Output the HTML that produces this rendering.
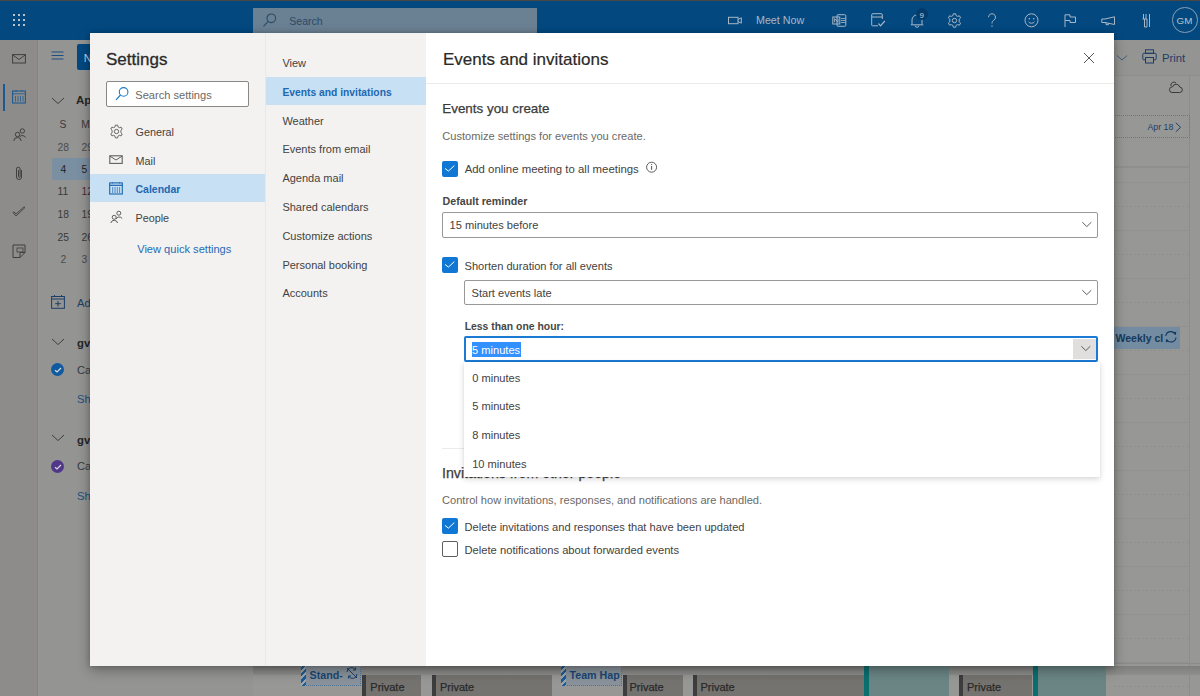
<!DOCTYPE html>
<html><head><meta charset="utf-8"><style>
html,body{margin:0;padding:0;width:1200px;height:696px;overflow:hidden;background:#959595}
body{position:relative;font-family:"Liberation Sans",sans-serif}
.t{position:absolute;white-space:nowrap}
.r{position:absolute}
</style></head><body>
<div class="r" style="left:0px;top:0px;width:1200px;height:696px;background:#979796"></div>
<div class="r" style="left:0px;top:0px;width:1200px;height:40px;background:#034980"></div>
<div class="r" style="left:0px;top:0px;width:1200px;height:1px;background:#4a4644"></div>
<div class="r" style="left:12.85px;top:13.85px;width:2.3px;height:2.3px;background:#b9c3cc"></div>
<div class="r" style="left:17.85px;top:13.85px;width:2.3px;height:2.3px;background:#b9c3cc"></div>
<div class="r" style="left:22.75px;top:13.85px;width:2.3px;height:2.3px;background:#b9c3cc"></div>
<div class="r" style="left:12.85px;top:18.650000000000002px;width:2.3px;height:2.3px;background:#b9c3cc"></div>
<div class="r" style="left:17.85px;top:18.650000000000002px;width:2.3px;height:2.3px;background:#b9c3cc"></div>
<div class="r" style="left:22.75px;top:18.650000000000002px;width:2.3px;height:2.3px;background:#b9c3cc"></div>
<div class="r" style="left:12.85px;top:23.55px;width:2.3px;height:2.3px;background:#b9c3cc"></div>
<div class="r" style="left:17.85px;top:23.55px;width:2.3px;height:2.3px;background:#b9c3cc"></div>
<div class="r" style="left:22.75px;top:23.55px;width:2.3px;height:2.3px;background:#b9c3cc"></div>
<div class="r" style="left:253px;top:7.5px;width:284px;height:26px;background:#6a8093"></div>
<svg class="r" style="left:262px;top:12px" width="16" height="16" viewBox="0 0 16 16"><circle cx="9.3" cy="6.3" r="4.3" fill="none" stroke="#2a4a66" stroke-width="1.1"/><path d="M6.2 9.4 L1.5 14.3" stroke="#2a4a66" stroke-width="1.1"/></svg>
<div class="t" style="left:289.2px;top:11px;font-size:10.6px;line-height:20px;color:#2a4a66;">Search</div>
<svg class="r" style="left:727px;top:16px" width="16" height="9" viewBox="0 0 16 9"><rect x="1.5" y="1.3" width="9.5" height="6.4" fill="none" stroke="#a9b7c5" stroke-width="1"/><path d="M11 3.5 L14.3 1.8 V7.2 L11 5.5" fill="none" stroke="#a9b7c5" stroke-width="1"/></svg>
<div class="t" style="left:756px;top:10px;font-size:10.7px;line-height:20px;color:#a9b7c5;">Meet Now</div>
<svg class="r" style="left:832px;top:14px" width="15" height="13" viewBox="0 0 15 13"><rect x="5" y="0.7" width="8.8" height="11.6" rx="1" fill="none" stroke="#a9b7c5" stroke-width="1"/><rect x="0.8" y="3" width="7" height="7" fill="none" stroke="#a9b7c5" stroke-width="1"/><path d="M2.6 8.3 V4.6 L6 8.3 V4.6" fill="none" stroke="#a9b7c5" stroke-width="0.9"/><path d="M9 4.5 H13.5 M9 6.5 H13.5 M9 8.5 H13.5" stroke="#a9b7c5" stroke-width="0.8"/></svg>
<svg class="r" style="left:871px;top:13px" width="15" height="15" viewBox="0 0 15 15"><path d="M7 12.8 H1.5 a0.8 0.8 0 0 1 -0.8 -0.8 V2 a1.3 1.3 0 0 1 1.3 -1.3 H10 a1.3 1.3 0 0 1 1.3 1.3 V6" fill="none" stroke="#a9b7c5" stroke-width="1"/><path d="M0.7 4 H11.3" stroke="#a9b7c5" stroke-width="1"/><path d="M7.5 10.5 L9.5 12.8 L13.8 8" fill="none" stroke="#a9b7c5" stroke-width="1.2"/></svg>
<svg class="r" style="left:910px;top:13px" width="14" height="15" viewBox="0 0 14 15"><path d="M2 11.5 V7 a5 5 0 0 1 10 0 V11.5 M0.8 11.8 H13.2 M5.2 12.5 a1.8 1.8 0 0 0 3.6 0" fill="none" stroke="#a9b7c5" stroke-width="1"/></svg>
<div class="r" style="left:916.4px;top:7.7px;width:12px;height:12px;background:#033b6b;border-radius:50%"></div>
<div class="t" style="left:919.6px;top:6px;font-size:8.0px;line-height:20px;color:#c9d3dd;">9</div>
<svg class="r" style="left:947px;top:13px" width="15" height="15" viewBox="0 0 15 15"><circle cx="7.5" cy="7.5" r="2.2" fill="none" stroke="#a9b7c5" stroke-width="1"/><path d="M6.3 0.8 H8.7 L9.1 2.6 L10.6 3.4 L12.4 2.8 L13.6 4.9 L12.2 6.2 V8.8 L13.6 10.1 L12.4 12.2 L10.6 11.6 L9.1 12.4 L8.7 14.2 H6.3 L5.9 12.4 L4.4 11.6 L2.6 12.2 L1.4 10.1 L2.8 8.8 V6.2 L1.4 4.9 L2.6 2.8 L4.4 3.4 L5.9 2.6 Z" fill="none" stroke="#a9b7c5" stroke-width="1"/></svg>
<svg class="r" style="left:986px;top:13px" width="12" height="15" viewBox="0 0 12 15"><path d="M2.5 4.2 a3.5 3.5 0 1 1 5.5 2.9 C6.6 8 6 8.8 6 10.5" fill="none" stroke="#a9b7c5" stroke-width="1"/><circle cx="6" cy="13" r="0.7" fill="#a9b7c5"/></svg>
<svg class="r" style="left:1024px;top:13px" width="15" height="15" viewBox="0 0 15 15"><circle cx="7.5" cy="7.3" r="6.5" fill="none" stroke="#a9b7c5" stroke-width="1"/><circle cx="5.3" cy="5.8" r="0.8" fill="#a9b7c5"/><circle cx="9.7" cy="5.8" r="0.8" fill="#a9b7c5"/><path d="M4.5 8.8 a3.5 3 0 0 0 6 0" fill="none" stroke="#a9b7c5" stroke-width="1"/></svg>
<svg class="r" style="left:1064px;top:14px" width="13" height="14" viewBox="0 0 13 14"><path d="M1 13 V0.8 H6 V3 H11.5 V8.5 H6 V6.5 H1" fill="none" stroke="#a9b7c5" stroke-width="1"/></svg>
<svg class="r" style="left:1101px;top:16px" width="15" height="10" viewBox="0 0 15 10"><path d="M0.8 3 H4 L13.5 0.8 V8.5 L4 6.5 H0.8 Z M5 6.7 V8.7 H7.5 V7.3" fill="none" stroke="#a9b7c5" stroke-width="1"/></svg>
<svg class="r" style="left:1141px;top:13px" width="11" height="15" viewBox="0 0 11 15"><path d="M2.5 1 V6 M5 1 V6 M1.5 6 H6 V14 H3.5 V6 M8.5 1 V14" fill="none" stroke="#a9b7c5" stroke-width="1"/></svg>
<div class="r" style="left:1172.3px;top:7.4px;width:25.4px;height:25.4px;border:1px solid #8b9fb3;border-radius:50%;box-sizing:border-box"></div>
<div class="t" style="left:1176.6px;top:11px;font-size:9.8px;line-height:20px;color:#b8c4cf;">GM</div>
<div class="r" style="left:0px;top:40px;width:37px;height:656px;background:#8e8c8a"></div>
<div class="r" style="left:37px;top:40px;width:1px;height:656px;background:#858483"></div>
<svg class="r" style="left:12px;top:54px" width="14" height="10" viewBox="0 0 14 10"><rect x="0.6" y="0.6" width="12.8" height="8.4" fill="none" stroke="#3f3f3f" stroke-width="1"/><path d="M0.8 1 L7 5.5 L13.2 1" fill="none" stroke="#3f3f3f" stroke-width="1"/></svg>
<div class="r" style="left:3.2px;top:84.3px;width:2px;height:26.4px;background:#1c5a94"></div>
<svg class="r" style="left:12px;top:90px" width="14" height="14" viewBox="0 0 14 14"><rect x="0.6" y="1" width="12.8" height="12" fill="none" stroke="#1c5a94" stroke-width="1.1"/><path d="M0.6 3.8 H13.4 M4 0 V2 M10 0 V2 M3.5 6 V11.5 M6 6 V11.5 M8.5 6 V11.5 M11 6 V11.5" stroke="#1c5a94" stroke-width="0.8"/></svg>
<svg class="r" style="left:13px;top:128px" width="13" height="14" viewBox="0 0 13 14"><circle cx="4.5" cy="6.5" r="2.2" fill="none" stroke="#3f3f3f" stroke-width="1"/><circle cx="9.3" cy="3" r="2.2" fill="none" stroke="#3f3f3f" stroke-width="1"/><path d="M0.8 13 a3.7 3.5 0 0 1 7.4 0 M6.5 9 a3.5 3.5 0 0 1 6 0.5" fill="none" stroke="#3f3f3f" stroke-width="1"/></svg>
<svg class="r" style="left:15px;top:166px" width="9" height="15" viewBox="0 0 9 15"><path d="M6.5 4 V11 a2.5 2.5 0 0 1 -5 0 V3 a1.8 1.8 0 0 1 3.6 0 V10.5 a0.8 0.8 0 0 1 -1.6 0 V4" fill="none" stroke="#3f3f3f" stroke-width="1"/></svg>
<svg class="r" style="left:12px;top:206px" width="14" height="12" viewBox="0 0 14 12"><path d="M1 6.5 L4 10 L13 1.5 L12 0.8 L4 8 L2 5.8 Z" fill="none" stroke="#3f3f3f" stroke-width="0.9"/></svg>
<svg class="r" style="left:12px;top:244px" width="14" height="15" viewBox="0 0 14 15"><path d="M8 13.5 H1 V1 H13 V8.5 L8 13.5 V8.5 H13" fill="none" stroke="#3f3f3f" stroke-width="1"/><rect x="5" y="4" width="6" height="4" fill="none" stroke="#3f3f3f" stroke-width="0.8"/></svg>
<div class="r" style="left:38px;top:40px;width:215px;height:656px;background:#949493"></div>
<svg class="r" style="left:51px;top:51px" width="13" height="9" viewBox="0 0 13 9"><path d="M0.5 1 H12.5 M0.5 4.5 H12.5 M0.5 8 H12.5" stroke="#1c4f80" stroke-width="1"/></svg>
<div class="r" style="left:76.5px;top:44.4px;width:60px;height:25.3px;background:#034980;border-radius:2px"></div>
<div class="t" style="left:83.8px;top:48px;font-size:11.0px;line-height:20px;color:#c9d5e0;">New event</div>
<svg class="r" style="left:51px;top:97px" width="14" height="8" viewBox="0 0 14 8"><path d="M1 1 L7 6.5 L13 1" fill="none" stroke="#3f3f3f" stroke-width="1"/></svg>
<div class="t" style="left:76px;top:90px;font-size:11.5px;line-height:20px;color:#262626;font-weight:bold;">April 2023</div>
<div class="r" style="left:52.3px;top:158px;width:60px;height:22.4px;background:#7a8fa2;border-radius:2px"></div>
<div class="t" style="left:59.5px;top:115px;font-size:10.3px;line-height:20px;color:#3a3a3a;">S</div>
<div class="t" style="left:81.3px;top:115px;font-size:10.3px;line-height:20px;color:#3a3a3a;">M</div>
<div class="t" style="left:57.599999999999994px;top:138px;font-size:10.3px;line-height:20px;color:#4c4c4c;">28</div>
<div class="t" style="left:81.5px;top:138px;font-size:10.3px;line-height:20px;color:#4c4c4c;">29</div>
<div class="t" style="left:60.449999999999996px;top:160px;font-size:10.3px;line-height:20px;color:#1e1e1e;">4</div>
<div class="t" style="left:81.5px;top:160px;font-size:10.3px;line-height:20px;color:#1e1e1e;">5</div>
<div class="t" style="left:57.599999999999994px;top:182px;font-size:10.3px;line-height:20px;color:#3a3a3a;">11</div>
<div class="t" style="left:81.5px;top:182px;font-size:10.3px;line-height:20px;color:#4a2a33;">12</div>
<div class="t" style="left:57.599999999999994px;top:205px;font-size:10.3px;line-height:20px;color:#3a3a3a;">18</div>
<div class="t" style="left:81.5px;top:205px;font-size:10.3px;line-height:20px;color:#3a3a3a;">19</div>
<div class="t" style="left:57.599999999999994px;top:228px;font-size:10.3px;line-height:20px;color:#3a3a3a;">25</div>
<div class="t" style="left:81.5px;top:228px;font-size:10.3px;line-height:20px;color:#3a3a3a;">26</div>
<div class="t" style="left:60.449999999999996px;top:250px;font-size:10.3px;line-height:20px;color:#4c4c4c;">2</div>
<div class="t" style="left:81.5px;top:250px;font-size:10.3px;line-height:20px;color:#4c4c4c;">3</div>
<svg class="r" style="left:51px;top:295px" width="14" height="14" viewBox="0 0 14 14"><rect x="0.6" y="1.5" width="12.8" height="11.8" fill="none" stroke="#1c3f66" stroke-width="1"/><path d="M0.6 4 H13.4 M3.5 0 V2 M10.5 0 V2 M7 6 V11.5 M4.2 8.7 H9.8" stroke="#1c3f66" stroke-width="1"/></svg>
<div class="t" style="left:77px;top:293px;font-size:11.2px;line-height:20px;color:#1c3f66;">Add calendar</div>
<svg class="r" style="left:51px;top:337.5px" width="14" height="8" viewBox="0 0 14 8"><path d="M1 1 L7 6.5 L13 1" fill="none" stroke="#3f3f3f" stroke-width="1"/></svg>
<div class="t" style="left:77px;top:333px;font-size:11.3px;line-height:20px;color:#262626;font-weight:bold;">gvaz</div>
<div class="r" style="left:50.7px;top:363.1px;width:13.4px;height:13.4px;background:#0f5aa0;border-radius:50%"></div>
<svg class="r" style="left:50.7px;top:363.1px" width="14" height="14" viewBox="0 0 14 14"><path d="M4 7.2 L6 9 L10 5" fill="none" stroke="#d8d8d8" stroke-width="1.2"/></svg>
<div class="t" style="left:77px;top:360px;font-size:11.2px;line-height:20px;color:#3a3a3a;">Calendar</div>
<div class="t" style="left:77px;top:389px;font-size:11.2px;line-height:20px;color:#1c4f80;">Show all</div>
<svg class="r" style="left:51px;top:434.1px" width="14" height="8" viewBox="0 0 14 8"><path d="M1 1 L7 6.5 L13 1" fill="none" stroke="#3f3f3f" stroke-width="1"/></svg>
<div class="t" style="left:77px;top:430px;font-size:11.3px;line-height:20px;color:#262626;font-weight:bold;">gvaz</div>
<div class="r" style="left:50.7px;top:459.70000000000005px;width:13.4px;height:13.4px;background:#51378a;border-radius:50%"></div>
<svg class="r" style="left:50.7px;top:459.70000000000005px" width="14" height="14" viewBox="0 0 14 14"><path d="M4 7.2 L6 9 L10 5" fill="none" stroke="#d8d8d8" stroke-width="1.2"/></svg>
<div class="t" style="left:77px;top:456px;font-size:11.2px;line-height:20px;color:#3a3a3a;">Calendar</div>
<div class="t" style="left:77px;top:486px;font-size:11.2px;line-height:20px;color:#1c4f80;">Show all</div>
<div class="r" style="left:253px;top:40px;width:947px;height:656px;background:#979796"></div>
<div class="r" style="left:253px;top:40px;width:947px;height:35px;background:#949493"></div>
<div class="r" style="left:253px;top:75px;width:947px;height:1px;background:#8f8f8e"></div>
<svg class="r" style="left:1116px;top:54px" width="12" height="8" viewBox="0 0 12 8"><path d="M1 1.5 L6 6 L11 1.5" fill="none" stroke="#3f5f80" stroke-width="1"/></svg>
<svg class="r" style="left:1142px;top:49px" width="15" height="15" viewBox="0 0 15 15"><rect x="3.5" y="0.8" width="8" height="3.5" fill="none" stroke="#1c3f66" stroke-width="1"/><rect x="0.8" y="4.3" width="13.4" height="6.5" rx="1" fill="none" stroke="#1c3f66" stroke-width="1"/><rect x="3.5" y="8.5" width="8" height="5.5" fill="#949493" stroke="#1c3f66" stroke-width="1"/></svg>
<div class="t" style="left:1162px;top:48px;font-size:11.3px;line-height:20px;color:#1c3f66;">Print</div>
<div class="r" style="left:1189px;top:75px;width:1px;height:621px;background:#8c8c8b"></div>
<div class="r" style="left:1114px;top:166px;width:76px;height:2px;background:#8f8f8e"></div>
<div class="r" style="left:1114px;top:181.8px;width:76px;height:1px;background:#92918f"></div>
<div class="r" style="left:1114px;top:205.83px;width:76px;height:1px;background:repeating-linear-gradient(90deg,#908f8d 0 2px,transparent 2px 4px)"></div>
<div class="r" style="left:1114px;top:229.86px;width:76px;height:1px;background:#92918f"></div>
<div class="r" style="left:1114px;top:253.89000000000001px;width:76px;height:1px;background:repeating-linear-gradient(90deg,#908f8d 0 2px,transparent 2px 4px)"></div>
<div class="r" style="left:1114px;top:277.92px;width:76px;height:1px;background:#92918f"></div>
<div class="r" style="left:1114px;top:301.95000000000005px;width:76px;height:1px;background:repeating-linear-gradient(90deg,#908f8d 0 2px,transparent 2px 4px)"></div>
<div class="r" style="left:1114px;top:325.98px;width:76px;height:1px;background:#92918f"></div>
<div class="r" style="left:1114px;top:350.01px;width:76px;height:1px;background:repeating-linear-gradient(90deg,#908f8d 0 2px,transparent 2px 4px)"></div>
<div class="r" style="left:1114px;top:374.04px;width:76px;height:1px;background:#92918f"></div>
<div class="r" style="left:1114px;top:398.07000000000005px;width:76px;height:1px;background:repeating-linear-gradient(90deg,#908f8d 0 2px,transparent 2px 4px)"></div>
<div class="r" style="left:1114px;top:422.1px;width:76px;height:1px;background:#92918f"></div>
<div class="r" style="left:1114px;top:446.13000000000005px;width:76px;height:1px;background:repeating-linear-gradient(90deg,#908f8d 0 2px,transparent 2px 4px)"></div>
<div class="r" style="left:1114px;top:470.16px;width:76px;height:1px;background:#92918f"></div>
<div class="r" style="left:1114px;top:494.19px;width:76px;height:1px;background:repeating-linear-gradient(90deg,#908f8d 0 2px,transparent 2px 4px)"></div>
<div class="r" style="left:1114px;top:518.22px;width:76px;height:1px;background:#92918f"></div>
<div class="r" style="left:1114px;top:542.25px;width:76px;height:1px;background:repeating-linear-gradient(90deg,#908f8d 0 2px,transparent 2px 4px)"></div>
<div class="r" style="left:1114px;top:566.28px;width:76px;height:1px;background:#92918f"></div>
<div class="r" style="left:1114px;top:590.31px;width:76px;height:1px;background:repeating-linear-gradient(90deg,#908f8d 0 2px,transparent 2px 4px)"></div>
<div class="r" style="left:1114px;top:614.34px;width:76px;height:1px;background:#92918f"></div>
<div class="r" style="left:1114px;top:638.3700000000001px;width:76px;height:1px;background:repeating-linear-gradient(90deg,#908f8d 0 2px,transparent 2px 4px)"></div>
<div class="r" style="left:1114px;top:662.4000000000001px;width:76px;height:1px;background:#92918f"></div>
<div class="r" style="left:1114px;top:686.4300000000001px;width:76px;height:1px;background:repeating-linear-gradient(90deg,#908f8d 0 2px,transparent 2px 4px)"></div>
<svg class="r" style="left:1168px;top:81px" width="15" height="13" viewBox="0 0 15 13"><path d="M4 11.5 H11.5 a2.7 2.7 0 0 0 0.3 -5.4 a3.8 3.8 0 0 0 -7.3 -0.2 a2.8 2.8 0 0 0 -0.5 5.6 Z M3 5 a3 3 0 0 1 5 -3" fill="none" stroke="#3a3a3a" stroke-width="1"/></svg>
<div class="r" style="left:1100px;top:114.9px;width:89.5px;height:23.5px;border:1px dotted #5f7a94;box-sizing:border-box"></div>
<div class="t" style="left:1147.4px;top:117px;font-size:8.8px;line-height:20px;color:#1c3f66;">Apr 18</div>
<svg class="r" style="left:1175px;top:121.5px" width="7" height="11" viewBox="0 0 7 11"><path d="M0.8 0.8 L5.6 5.3 L0.8 9.8" fill="none" stroke="#1c3f66" stroke-width="1"/></svg>
<div class="r" style="left:1110px;top:327.1px;width:70px;height:21.8px;background:#738ca2"></div>
<div class="t" style="left:1115.5px;top:328px;font-size:10.5px;line-height:20px;color:#15385c;font-weight:bold;">Weekly cl</div>
<svg class="r" style="left:1164px;top:330px" width="14" height="14" viewBox="0 0 14 14"><path d="M1.8 6 a5 5 0 0 1 9.5 -1.5 M12 7.5 a5 5 0 0 1 -9.3 2" fill="none" stroke="#15385c" stroke-width="1.1"/><path d="M9.5 2.5 L12.3 1.8 L11.8 5 Z M4.5 11.5 L1.7 12.2 L2.2 9 Z" fill="#15385c"/></svg>
<div class="r" style="left:253px;top:662.6px;width:947px;height:1px;background:#8a8a8a"></div>
<div class="r" style="left:253px;top:666px;width:947px;height:9px;background:linear-gradient(#7e7e7d,#8e8e8d)"></div>
<div class="r" style="left:362px;top:675px;width:59px;height:30px;background:#75736f"></div>
<div class="r" style="left:362px;top:675px;width:4.3px;height:30px;background:#3d3d3d"></div>
<div class="t" style="left:370.3px;top:677px;font-size:11.0px;line-height:20px;color:#2a2a2a;-webkit-text-stroke:0.25px #2a2a2a;">Private</div>
<div class="r" style="left:432px;top:675px;width:120px;height:30px;background:#75736f"></div>
<div class="r" style="left:432px;top:675px;width:4.3px;height:30px;background:#3d3d3d"></div>
<div class="t" style="left:440px;top:677px;font-size:11.0px;line-height:20px;color:#2a2a2a;-webkit-text-stroke:0.25px #2a2a2a;">Private</div>
<div class="r" style="left:623px;top:675px;width:60px;height:30px;background:#75736f"></div>
<div class="r" style="left:623px;top:675px;width:4.3px;height:30px;background:#3d3d3d"></div>
<div class="t" style="left:629.5px;top:677px;font-size:11.0px;line-height:20px;color:#2a2a2a;-webkit-text-stroke:0.25px #2a2a2a;">Private</div>
<div class="r" style="left:692.5px;top:675px;width:171px;height:30px;background:#75736f"></div>
<div class="r" style="left:692.5px;top:675px;width:4.3px;height:30px;background:#3d3d3d"></div>
<div class="t" style="left:700.5px;top:677px;font-size:11.0px;line-height:20px;color:#2a2a2a;-webkit-text-stroke:0.25px #2a2a2a;">Private</div>
<div class="r" style="left:959px;top:675px;width:73px;height:30px;background:#75736f"></div>
<div class="r" style="left:959px;top:675px;width:4.3px;height:30px;background:#3d3d3d"></div>
<div class="t" style="left:967px;top:677px;font-size:11.0px;line-height:20px;color:#2a2a2a;-webkit-text-stroke:0.25px #2a2a2a;">Private</div>
<div class="r" style="left:864px;top:655px;width:85px;height:41px;background:#6b8585"></div>
<div class="r" style="left:864px;top:655px;width:5px;height:41px;background:#0b6f6f"></div>
<div class="r" style="left:1033px;top:655px;width:73px;height:41px;background:#6b8585"></div>
<div class="r" style="left:1033px;top:655px;width:5px;height:41px;background:#0b6f6f"></div>
<div class="r" style="left:301px;top:655px;width:60px;height:31px;background:#89929a;border:1px dotted #4f7396;box-sizing:border-box"></div>
<div class="r" style="left:301px;top:655px;width:5px;height:31px;background:repeating-linear-gradient(135deg,#1d5a96 0 2.2px,#9aa5ae 2.2px 4.4px)"></div>
<div class="t" style="left:309.5px;top:665px;font-size:10.7px;line-height:20px;color:#1a4674;font-weight:bold;">Stand-</div>
<div class="r" style="left:561px;top:655px;width:61px;height:31px;background:#89929a;border:1px dotted #4f7396;box-sizing:border-box"></div>
<div class="r" style="left:561px;top:655px;width:5px;height:31px;background:repeating-linear-gradient(135deg,#1d5a96 0 2.2px,#9aa5ae 2.2px 4.4px)"></div>
<div class="t" style="left:569.5px;top:665px;font-size:10.7px;line-height:20px;color:#1a4674;font-weight:bold;">Team Hap</div>
<svg class="r" style="left:346px;top:667px" width="12" height="12" viewBox="0 0 12 12"><path d="M1 5 a4.5 4.5 0 0 1 8.5 -2 M11 7 a4.5 4.5 0 0 1 -8.5 2 M9.5 0.5 V3 H7 M2.5 11.5 V9 H5 M1 1 L11 11" fill="none" stroke="#173f6e" stroke-width="1"/></svg>
<div class="r" style="left:90px;top:33px;width:1024px;height:633px;background:#f3f2f1;box-shadow:0 4px 12px rgba(0,0,0,0.32),0 0 5px rgba(0,0,0,0.18)"></div>
<div class="r" style="left:265px;top:33px;width:1px;height:633px;background:#ebe9e7"></div>
<div class="r" style="left:426px;top:33px;width:688px;height:633px;background:#ffffff"></div>
<div class="t" style="left:106px;top:50px;font-size:17.0px;line-height:20px;color:#2b2a29;-webkit-text-stroke:0.3px #2b2a29;">Settings</div>
<div class="r" style="left:106px;top:81px;width:143px;height:25.5px;background:#fff;border:1px solid #8a8886;box-sizing:border-box;border-radius:2px"></div>
<svg class="r" style="left:115px;top:86px" width="15" height="15" viewBox="0 0 15 15"><circle cx="8.6" cy="5.9" r="4.3" fill="none" stroke="#1e78c8" stroke-width="1.1"/><path d="M5.5 9 L1 13.8" stroke="#1e78c8" stroke-width="1.2"/></svg>
<div class="t" style="left:135.3px;top:85px;font-size:11.1px;line-height:20px;color:#6b6966;">Search settings</div>
<div class="r" style="left:90px;top:173.8px;width:175px;height:28.6px;background:#c7e0f4"></div>
<svg class="r" style="left:108.5px;top:123.5px" width="15" height="15" viewBox="0 0 16 16"><circle cx="8" cy="8" r="2.3" fill="none" stroke="#605e5c" stroke-width="1"/><path d="M6.8 1.2 H9.2 L9.6 3.1 L11.1 3.9 L12.9 3.3 L14.1 5.4 L12.7 6.7 V9.3 L14.1 10.6 L12.9 12.7 L11.1 12.1 L9.6 12.9 L9.2 14.8 H6.8 L6.4 12.9 L4.9 12.1 L3.1 12.7 L1.9 10.6 L3.3 9.3 V6.7 L1.9 5.4 L3.1 3.3 L4.9 3.9 L6.4 3.1 Z" fill="none" stroke="#605e5c" stroke-width="1"/></svg>
<svg class="r" style="left:109px;top:155px" width="14" height="10" viewBox="0 0 14 10"><rect x="0.8" y="0.8" width="12.4" height="7.6" fill="none" stroke="#605e5c" stroke-width="1.1"/><path d="M1 1.2 L7 5 L13 1.2" fill="none" stroke="#605e5c" stroke-width="1"/></svg>
<svg class="r" style="left:109px;top:182px" width="14" height="13" viewBox="0 0 14 13"><rect x="0.7" y="0.9" width="12.6" height="11.1" fill="none" stroke="#1a64b0" stroke-width="1.1"/><path d="M0.7 3.3 H13.3" stroke="#1a64b0" stroke-width="1.2"/><path d="M3.5 0 V1.5 M10.5 0 V1.5 M3.7 5 V11 M6 5 V11 M8.3 5 V11 M10.6 5 V11" stroke="#1a64b0" stroke-width="0.7"/></svg>
<svg class="r" style="left:110px;top:210px" width="13" height="14" viewBox="0 0 13 14"><circle cx="4.2" cy="7.3" r="2" fill="none" stroke="#605e5c" stroke-width="1"/><circle cx="8.8" cy="3.2" r="2" fill="none" stroke="#605e5c" stroke-width="1"/><path d="M0.8 13 a3.5 3.5 0 0 1 6.8 0 M6 9 a3.6 3.6 0 0 1 6.2 -0.5" fill="none" stroke="#605e5c" stroke-width="1"/></svg>
<div class="t" style="left:135.5px;top:122px;font-size:10.8px;line-height:20px;color:#434241;">General</div>
<div class="t" style="left:135.5px;top:151px;font-size:10.8px;line-height:20px;color:#434241;">Mail</div>
<div class="t" style="left:135.5px;top:179px;font-size:10.5px;line-height:20px;color:#2068b0;font-weight:bold;">Calendar</div>
<div class="t" style="left:135.5px;top:208px;font-size:10.8px;line-height:20px;color:#434241;">People</div>
<div class="t" style="left:137.2px;top:239px;font-size:11.1px;line-height:20px;color:#1f6bb5;">View quick settings</div>
<div class="r" style="left:266px;top:76.6px;width:160px;height:28.4px;background:#c7e0f4"></div>
<div class="t" style="left:282.4px;top:53px;font-size:11.0px;line-height:20px;color:#434241;">View</div>
<div class="t" style="left:282.4px;top:83px;font-size:10.3px;line-height:20px;color:#2068b0;font-weight:bold;">Events and invitations</div>
<div class="t" style="left:282.4px;top:111px;font-size:11.0px;line-height:20px;color:#434241;">Weather</div>
<div class="t" style="left:282.4px;top:139px;font-size:11.0px;line-height:20px;color:#434241;">Events from email</div>
<div class="t" style="left:282.4px;top:168px;font-size:11.0px;line-height:20px;color:#434241;">Agenda mail</div>
<div class="t" style="left:282.4px;top:197px;font-size:11.0px;line-height:20px;color:#434241;">Shared calendars</div>
<div class="t" style="left:282.4px;top:226px;font-size:11.0px;line-height:20px;color:#434241;">Customize actions</div>
<div class="t" style="left:282.4px;top:255px;font-size:11.0px;line-height:20px;color:#434241;">Personal booking</div>
<div class="t" style="left:282.4px;top:283px;font-size:11.0px;line-height:20px;color:#434241;">Accounts</div>
<div class="t" style="left:443px;top:50px;font-size:17.0px;line-height:20px;color:#2b2a29;-webkit-text-stroke:0.2px #2b2a29;">Events and invitations</div>
<div class="r" style="left:426px;top:83px;width:688px;height:1px;background:#edebe9"></div>
<div class="t" style="left:442.3px;top:99px;font-size:13.4px;line-height:20px;color:#434241;-webkit-text-stroke:0.25px #323130;">Events you create</div>
<div class="t" style="left:442.3px;top:126px;font-size:11.1px;line-height:20px;color:#6b6966;">Customize settings for events you create.</div>
<div class="r" style="left:442.2px;top:160.6px;width:16px;height:16px;background:#1078d4;border-radius:2px"></div>
<svg class="r" style="left:442.2px;top:160.6px" width="16" height="16" viewBox="0 0 16 16"><path d="M3 7.4 L6.4 10.1 L12.3 4.6" fill="none" stroke="#fff" stroke-width="1"/></svg>
<div class="t" style="left:464.7px;top:159px;font-size:11.4px;line-height:20px;color:#434241;">Add online meeting to all meetings</div>
<svg class="r" style="left:645px;top:161px" width="13" height="13" viewBox="0 0 13 13"><circle cx="6.6" cy="6.2" r="5" fill="none" stroke="#605e5c" stroke-width="1"/><path d="M6.6 5 V8.8" stroke="#605e5c" stroke-width="1.1"/><circle cx="6.6" cy="3.6" r="0.6" fill="#605e5c"/></svg>
<div class="t" style="left:442.5px;top:191px;font-size:10.7px;line-height:20px;color:#474645;font-weight:bold;">Default reminder</div>
<div class="r" style="left:442px;top:212px;width:656px;height:25.5px;background:#fff;border:1px solid #9a9896;box-sizing:border-box;border-radius:2px"></div>
<div class="t" style="left:449.5px;top:215px;font-size:11.1px;line-height:20px;color:#434241;">15 minutes before</div>
<svg class="r" style="left:1081px;top:220.5px" width="12" height="8" viewBox="0 0 12 8"><path d="M1.3 1.2 L5.8 5.6 L10.3 1.2" fill="none" stroke="#605e5c" stroke-width="1"/></svg>
<div class="r" style="left:442.2px;top:257.4px;width:16px;height:16px;background:#1078d4;border-radius:2px"></div>
<svg class="r" style="left:442.2px;top:257.4px" width="16" height="16" viewBox="0 0 16 16"><path d="M3 7.4 L6.4 10.1 L12.3 4.6" fill="none" stroke="#fff" stroke-width="1"/></svg>
<div class="t" style="left:464.5px;top:256px;font-size:11.1px;line-height:20px;color:#434241;">Shorten duration for all events</div>
<div class="r" style="left:464px;top:280.2px;width:634px;height:25.3px;background:#fff;border:1px solid #9a9896;box-sizing:border-box;border-radius:2px"></div>
<div class="t" style="left:471.5px;top:283px;font-size:11.1px;line-height:20px;color:#434241;">Start events late</div>
<svg class="r" style="left:1081px;top:288.7px" width="12" height="8" viewBox="0 0 12 8"><path d="M1.3 1.2 L5.8 5.6 L10.3 1.2" fill="none" stroke="#605e5c" stroke-width="1"/></svg>
<div class="t" style="left:464.7px;top:317px;font-size:10.4px;line-height:20px;color:#474645;font-weight:bold;">Less than one hour:</div>
<div class="r" style="left:464px;top:336.3px;width:634px;height:25.7px;background:#fff;border:2px solid #1a7ad4;box-sizing:border-box;border-radius:2px"></div>
<div class="r" style="left:472px;top:342.2px;width:48.5px;height:14.5px;background:#3390ff"></div>
<div class="t" style="left:472px;top:340px;font-size:11.1px;line-height:20px;color:#ffffff;">5 minutes</div>
<div class="r" style="left:1073px;top:339px;width:23px;height:20px;background:#e1dfdd"></div>
<svg class="r" style="left:1080px;top:345px" width="12" height="8" viewBox="0 0 12 8"><path d="M1.3 1.2 L5.8 5.6 L10.3 1.2" fill="none" stroke="#605e5c" stroke-width="1"/></svg>
<div class="r" style="left:442px;top:448px;width:656px;height:1px;background:#edebe9"></div>
<div class="t" style="left:442px;top:463px;font-size:14.2px;line-height:20px;color:#434241;-webkit-text-stroke:0.25px #323130;">Invitations from other people</div>
<div class="r" style="left:464px;top:362px;width:636px;height:115.2px;background:#fff;box-shadow:0 2px 6px rgba(0,0,0,0.16),0 0 1px rgba(0,0,0,0.1)"></div>
<div class="t" style="left:472.2px;top:368px;font-size:11.1px;line-height:20px;color:#434241;">0 minutes</div>
<div class="t" style="left:472.2px;top:396px;font-size:11.1px;line-height:20px;color:#434241;">5 minutes</div>
<div class="t" style="left:472.2px;top:425px;font-size:11.1px;line-height:20px;color:#434241;">8 minutes</div>
<div class="t" style="left:472.2px;top:454px;font-size:11.1px;line-height:20px;color:#434241;">10 minutes</div>
<div class="t" style="left:442px;top:490px;font-size:11.1px;line-height:20px;color:#6b6966;">Control how invitations, responses, and notifications are handled.</div>
<div class="r" style="left:442.2px;top:518.4px;width:16px;height:16px;background:#1078d4;border-radius:2px"></div>
<svg class="r" style="left:442.2px;top:518.4px" width="16" height="16" viewBox="0 0 16 16"><path d="M3 7.4 L6.4 10.1 L12.3 4.6" fill="none" stroke="#fff" stroke-width="1"/></svg>
<div class="t" style="left:464.5px;top:517px;font-size:11.1px;line-height:20px;color:#434241;">Delete invitations and responses that have been updated</div>
<div class="r" style="left:442.2px;top:540.8px;width:16px;height:16px;background:#fff;border:1px solid #605e5c;box-sizing:border-box;border-radius:2px"></div>
<div class="t" style="left:464.5px;top:540px;font-size:11.2px;line-height:20px;color:#434241;">Delete notifications about forwarded events</div>
<svg class="r" style="left:1083px;top:52px" width="12" height="12" viewBox="0 0 12 12"><path d="M1 1 L11 11 M11 1 L1 11" stroke="#5a5958" stroke-width="1"/></svg>
</body></html>
